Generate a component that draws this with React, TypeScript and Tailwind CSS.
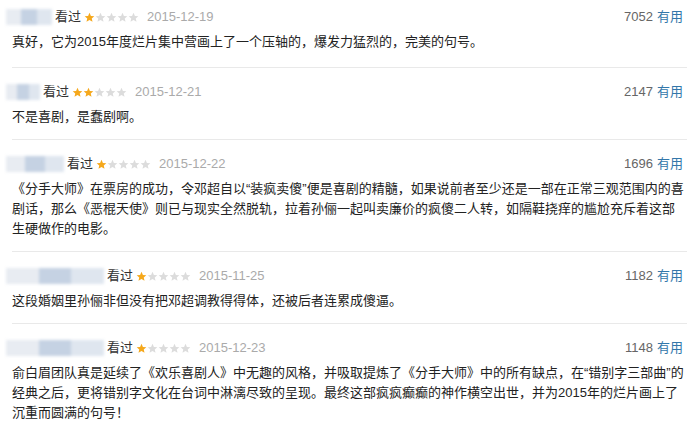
const font = { fontFamily: '"Liberation Sans", Arial, "Noto Sans CJK SC", sans-serif' };

type Review = {
  nameWidth: string;
  stars: number;
  date: string;
  useful: string;
  lines: string[];
};

const reviews: Review[] = [
  {
    nameWidth: 'w-[46px]',
    stars: 1,
    date: '2015-12-19',
    useful: '7052',
    lines: ['真好，它为2015年度烂片集中营画上了一个压轴的，爆发力猛烈的，完美的句号。'],
  },
  {
    nameWidth: 'w-[34px]',
    stars: 2,
    date: '2015-12-21',
    useful: '2147',
    lines: ['不是喜剧，是蠢剧啊。'],
  },
  {
    nameWidth: 'w-[58px]',
    stars: 1,
    date: '2015-12-22',
    useful: '1696',
    lines: [
      '《分手大师》在票房的成功，令邓超自以“装疯卖傻”便是喜剧的精髓，如果说前者至少还是一部在正常三观范围内的喜',
      '剧话，那么《恶棍天使》则已与现实全然脱轨，拉着孙俪一起叫卖廉价的疯傻二人转，如隔鞋挠痒的尴尬充斥着这部',
      '生硬做作的电影。',
    ],
  },
  {
    nameWidth: 'w-[98px]',
    stars: 1,
    date: '2015-11-25',
    useful: '1182',
    lines: ['这段婚姻里孙俪非但没有把邓超调教得得体，还被后者连累成傻逼。'],
  },
  {
    nameWidth: 'w-[98px]',
    stars: 1,
    date: '2015-12-23',
    useful: '1148',
    lines: [
      '俞白眉团队真是延续了《欢乐喜剧人》中无趣的风格，并吸取提炼了《分手大师》中的所有缺点，在“错别字三部曲”的',
      '经典之后，更将错别字文化在台词中淋漓尽致的呈现。最终这部疯疯癫癫的神作横空出世，并为2015年的烂片画上了',
      '沉重而圆满的句号！',
    ],
  },
];

const Star = ({ on }: { on: boolean }) => (
  <svg width="11" height="11" viewBox="0 0 24 24">
    <path
      d="M12 1.5l3.1 7 7.4.6-5.6 4.9 1.7 7.4L12 17.5l-6.6 3.9 1.7-7.4L1.5 9.1l7.4-.6z"
      fill={on ? '#f5a81c' : '#dcdcdc'}
    />
  </svg>
);

const Name = ({ width }: { width: string }) => (
  <div className={`${width} -ml-[6px] h-[16px] flex overflow-hidden blur-[1.5px]`}>
    <div className="flex-1 bg-[#e8ecf2]" />
    <div className="flex-1 bg-[#c5d2e3]" />
    <div className="flex-1 bg-[#dfe6ef]" />
  </div>
);

const ReviewItem = ({ review, first, last }: { review: Review; first: boolean; last: boolean }) => (
  <div
    className={`${first ? 'pt-[7px] pb-[15px]' : 'pt-[14px] pb-[12px]'} ${last ? '' : 'border-b border-[#e9e9e9]'}`}
  >
    <div className="h-[20px] flex items-center text-[13px] pr-[4px]">
      <Name width={review.nameWidth} />
      <span className="ml-[3px] text-[#333]">看过</span>
      <span className="ml-[3px] flex">
        {[0, 1, 2, 3, 4].map((i) => (
          <Star key={i} on={i < review.stars} />
        ))}
      </span>
      <span className="ml-[8px] text-[#aaa]">{review.date}</span>
      <span className="ml-auto text-[#666]">{review.useful}</span>
      <span className="ml-[4px] text-[#37a]">有用</span>
    </div>
    <div className="mt-[5px] text-[13px] leading-[20px] text-[#222]">
      {review.lines.map((line, i) => (
        <p key={i} className="whitespace-nowrap">
          {line}
        </p>
      ))}
    </div>
  </div>
);

export default function App() {
  return (
    <div className="w-[697px] h-[434px] overflow-hidden bg-white pl-[12px] pr-[10px]" style={font}>
      {reviews.map((r, i) => (
        <ReviewItem key={i} review={r} first={i === 0} last={i === reviews.length - 1} />
      ))}
    </div>
  );
}
